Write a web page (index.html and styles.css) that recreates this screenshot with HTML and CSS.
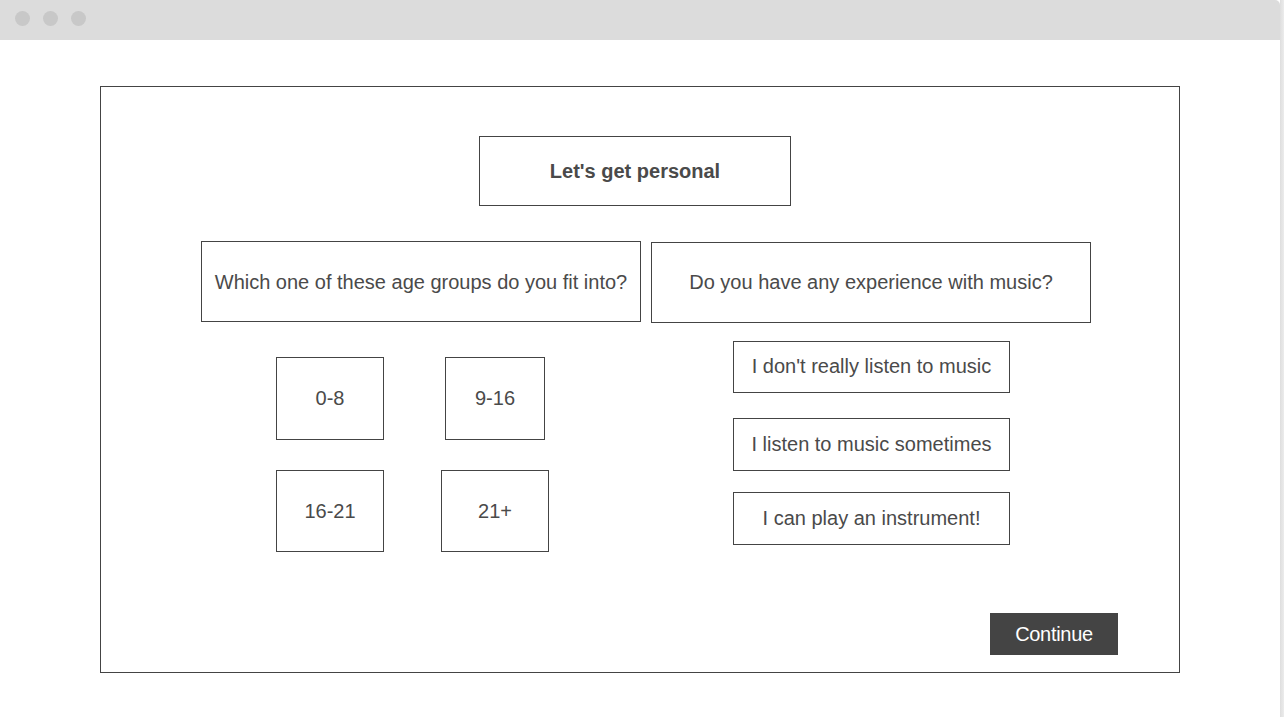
FILE: index.html
```html
<!DOCTYPE html>
<html lang="en">
<head>
<meta charset="utf-8">
<title>Let's get personal</title>
<link rel="stylesheet" href="styles.css">
</head>
<body>
<div class="page">
  <div class="window">
    <div class="titlebar">
      <span class="dot"></span>
      <span class="dot"></span>
      <span class="dot"></span>
    </div>
    <div class="content">
      <div class="frame">
        <div class="title-box">Let's get personal</div>
        <div class="columns">
          <div class="col col-left">
            <div class="question">Which one of these age groups do you fit into?</div>
            <div class="ages">
              <div class="age age-a">0-8</div>
              <div class="age age-b">9-16</div>
              <div class="age age-c">16-21</div>
              <div class="age age-d">21+</div>
            </div>
          </div>
          <div class="col col-right">
            <div class="question question-right">Do you have any experience with music?</div>
            <div class="options">
              <div class="option">I don't really listen to music</div>
              <div class="option option-2">I listen to music sometimes</div>
              <div class="option option-3">I can play an instrument!</div>
            </div>
          </div>
        </div>
        <div class="footer">
          <button class="continue">Continue</button>
        </div>
      </div>
    </div>
  </div>
  <div class="edge"></div>
</div>
</body>
</html>
```
FILE: styles.css
```css
* { box-sizing: border-box; }

html, body {
  margin: 0;
  padding: 0;
  height: 100%;
}

body {
  font-family: "Liberation Sans", Arial, sans-serif;
  color: #4a4a4a;
  background: #fff;
  overflow: hidden;
}

.page {
  display: flex;
  height: 717px;
}

.window {
  width: 1280px;
  display: flex;
  flex-direction: column;
  background: #fff;
}

.edge {
  flex: 1;
  background: linear-gradient(to right, #dedede, #ececec);
}

.titlebar {
  height: 40px;
  background: #dcdcdc;
  border-top-right-radius: 5px;
  display: flex;
  align-items: flex-start;
  gap: 13px;
  padding: 11px 0 0 15px;
}

.dot {
  width: 15px;
  height: 15px;
  border-radius: 50%;
  background: #c8c8c8;
}

.content {
  flex: 1;
  padding: 46px 0 0 100px;
}

.frame {
  width: 1080px;
  height: 587px;
  border: 1px solid #444;
  display: flex;
  flex-direction: column;
  padding: 49px 0 17px 0;
}

.title-box {
  margin-left: 378px;
  width: 312px;
  height: 70px;
  border: 1px solid #444;
  display: flex;
  align-items: center;
  justify-content: center;
  font-weight: bold;
  font-size: 20px;
  padding-top: 1px;
}

.columns {
  display: flex;
  gap: 10px;
  margin: 35px 0 0 100px;
}

.col {
  width: 440px;
  display: flex;
  flex-direction: column;
}

.question {
  height: 81px;
  border: 1px solid #444;
  display: flex;
  align-items: center;
  justify-content: center;
  font-size: 20px;
  white-space: nowrap;
  padding-top: 1px;
}

.question-right {
  margin-top: 1px;
  padding-top: 0;
}

.ages {
  display: grid;
  grid-template-columns: 108px 108px;
  column-gap: 57px;
  row-gap: 30px;
  margin: 35px 0 0 75px;
}

.age {
  border: 1px solid #444;
  display: flex;
  align-items: center;
  justify-content: center;
  font-size: 20px;
  height: 83px;
}

.age-b {
  width: 100px;
  margin-left: 4px;
}

.age-c,
.age-d {
  height: 82px;
}

.options {
  display: flex;
  flex-direction: column;
  margin: 18px 0 0 82px;
}

.option {
  width: 277px;
  height: 52px;
  border: 1px solid #444;
  display: flex;
  align-items: center;
  justify-content: center;
  font-size: 20px;
  white-space: nowrap;
  padding-bottom: 1px;
}

.option-2 {
  height: 53px;
  margin-top: 25px;
}

.option-3 {
  height: 53px;
  margin-top: 21px;
}

.footer {
  margin-top: auto;
  display: flex;
  justify-content: flex-end;
  padding-right: 61px;
}

.continue {
  width: 128px;
  height: 42px;
  background: #444;
  border: none;
  color: #fff;
  font-family: "Liberation Sans", Arial, sans-serif;
  font-size: 20px;
  letter-spacing: -0.3px;
  padding: 0;
}
```
